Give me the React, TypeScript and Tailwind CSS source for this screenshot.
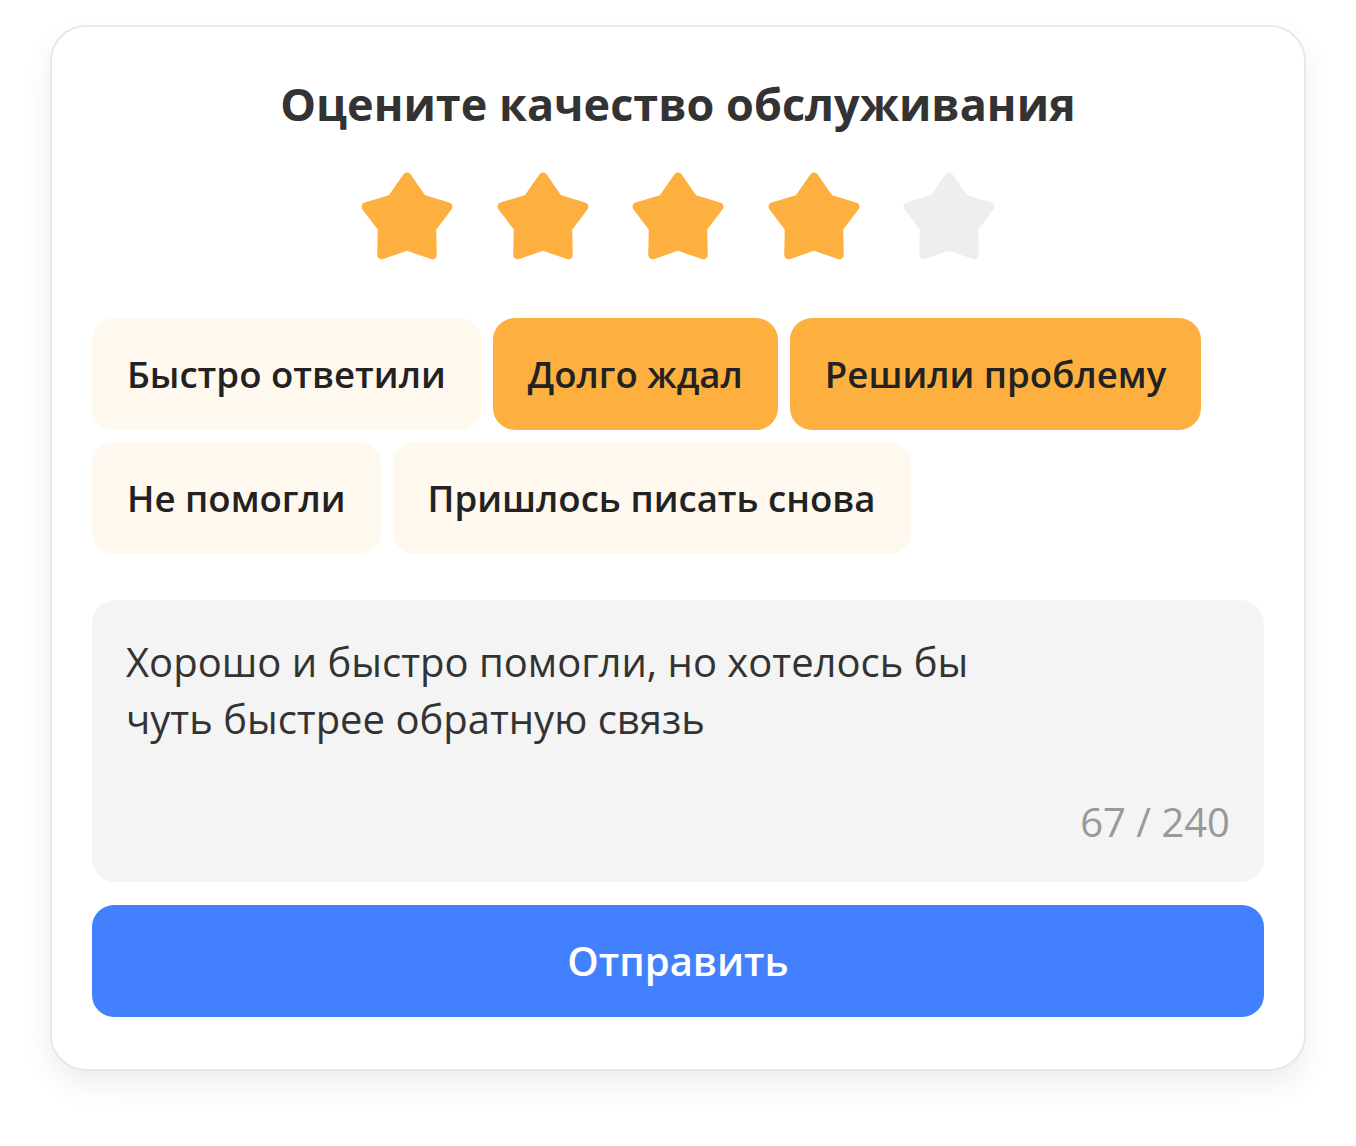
import React from "react";

const CHIPS = [
  { label: "Быстро ответили", active: false },
  { label: "Долго ждал", active: true },
  { label: "Решили проблему", active: true },
  { label: "Не помогли", active: false },
  { label: "Пришлось писать снова", active: false },
];

// 5-point star, outer radius 43, inner 26, centred on 0,0
const STAR_POINTS =
  "0,-43 15.28,-21.03 40.9,-13.29 24.73,8.03 25.27,34.79 0,26 -25.27,34.79 -24.73,8.03 -40.9,-13.29 -15.28,-21.03";

function Star({ filled }: { filled: boolean }) {
  const color = filled ? "#FDB040" : "#EEEEEE";
  return (
    <svg width="92" height="88" viewBox="-46 -48 92 88">
      <polygon points={STAR_POINTS} fill={color} stroke={color} strokeWidth="9" strokeLinejoin="round" />
    </svg>
  );
}

export default function App() {
  const rating = 4;
  return (
    <div className="min-h-screen bg-white px-[50px] pt-[25px] font-['Open_Sans',sans-serif]">
      <div className="rounded-[36px] border-2 border-[#e8e8e8] bg-white px-[40px] pt-[50px] pb-[52px] shadow-[0_14px_30px_rgba(0,0,0,0.07)]">
        {/* title */}
        <h1 className="text-center text-[45px] leading-[54px] font-bold text-[#333333]">
          Оцените качество обслуживания
        </h1>

        {/* stars */}
        <div className="mt-[41px] flex justify-center gap-[43.5px]">
          {[1, 2, 3, 4, 5].map((n) => (
            <Star key={n} filled={n <= rating} />
          ))}
        </div>

        {/* tags */}
        <div className="mt-[58px] flex flex-wrap gap-[12px]">
          {CHIPS.map((chip) => (
            <div
              key={chip.label}
              className={`flex h-[112px] items-center rounded-[22px] px-[35px] text-[36.6px] font-semibold text-[#222222] ${
                chip.active ? "bg-[#FDB040]" : "bg-[#FEF8EE]"
              }`}
            >
              {chip.label}
            </div>
          ))}
        </div>

        {/* comment */}
        <div className="mt-[46px] flex h-[282px] flex-col justify-between rounded-[24px] bg-[#F4F4F4] px-[34px] pt-[33px] pb-[36px]">
          <p className="text-[40px] leading-[57px] text-[#333333]">
            Хорошо и быстро помогли, но хотелось бы
            <br />
            чуть быстрее обратную связь
          </p>
          <div className="text-right text-[40px] leading-[48px] text-[#999999]">67 / 240</div>
        </div>

        {/* submit */}
        <button className="mt-[23px] flex h-[112px] w-full items-center justify-center rounded-[22px] bg-[#4380FE] text-[40px] font-semibold text-white">
          Отправить
        </button>
      </div>
    </div>
  );
}
